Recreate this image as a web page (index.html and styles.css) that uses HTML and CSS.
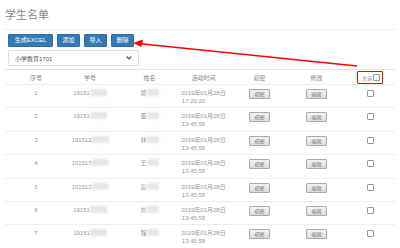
FILE: index.html
```html
<!DOCTYPE html>
<html lang="zh-CN">
<head>
    <meta charset="UTF-8">
    <meta name="viewport" content="width=device-width, initial-scale=1.0">
    <title>学生名单</title>
    <link rel="stylesheet" href="styles.css">
</head>
<body>

    <div class="page">
        <h2 class="title">学生名单</h2>

        <div class="toolbar">
            <div class="btn-row">
                <button class="btn">生成EXCEL</button>
                <button class="btn">添加</button>
                <button class="btn">导入</button>
                <button class="btn">删除</button>
            </div>
            <div class="select">
                <span>小学教育1701</span>
                <svg class="chevron" width="6" height="4" viewBox="0 0 6 4"><path d="M0.5 0.5 L3 3 L5.5 0.5" fill="none" stroke="#555" stroke-width="1.2"/></svg>
            </div>
        </div>

        <div class="grid head">
            <div class="cell">序号</div>
            <div class="cell">学号</div>
            <div class="cell name-col">姓名</div>
            <div class="cell">活动时间</div>
            <div class="cell">初密</div>
            <div class="cell">修改</div>
            <div class="cell"><span class="all-box">全选<span class="check"></span></span></div>
        </div>

        <div id="rows"></div>
    </div>

    <svg class="arrow" width="400" height="248" viewBox="0 0 400 248">
        <line x1="357" y1="66" x2="138" y2="43.5" stroke="#f00" stroke-width="1.3"/>
        <path d="M133 43 L143 39.5 L141.5 47 Z" fill="#f00"/>
    </svg>

    <script>
        const rows = [
            { no: 1, id: '19151', time: '17:20:20' },
            { no: 2, id: '19151', time: '13:45:58' },
            { no: 3, id: '191512', time: '13:45:58' },
            { no: 4, id: '191517', time: '13:45:58' },
            { no: 5, id: '191512', time: '13:45:58' },
            { no: 6, id: '19151', time: '13:45:58' },
            { no: 7, id: '19151', time: '13:45:58' }
        ];
        const names = ['郑', '董', '林', '王', '彭', '刘', '程'];

        const box = document.getElementById('rows');
        rows.forEach((r, i) => {
            const row = document.createElement('div');
            row.className = 'grid row';
            row.innerHTML = `
                <div class="cell">${r.no}</div>
                <div class="cell">${r.id}<span class="blur"></span></div>
                <div class="cell name-col">${names[i]}<span class="blur short"></span></div>
                <div class="cell date"><div class="date-box"><div class="nowrap">2019年01月28日</div>${r.time}</div></div>
                <div class="cell"><button class="small-btn">初密</button></div>
                <div class="cell"><button class="small-btn">编辑</button></div>
                <div class="cell"><span class="check"></span></div>`;
            box.appendChild(row);
        });
    </script>

</body>
</html>
```

FILE: styles.css
```css
body {
    margin: 0;
    padding: 0;
    background-color: #fff;
    font-family: "Liberation Sans", "Noto Sans CJK SC", sans-serif;
    color: #999;
}

.page {
    padding: 0 5px;
}

.title {
    margin: 0;
    padding-top: 8px;
    height: 21px;
    font-size: 11px;
    line-height: 14px;
    font-weight: normal;
    color: #888;
    border-bottom: 1px solid #eee;
}

.toolbar {
    padding: 4px 3px 3px;
    border-bottom: 1px solid #e5e5e5;
}

.btn-row {
    display: flex;
    gap: 3px;
}

.btn {
    height: 13px;
    padding: 0 4px;
    background-color: #337ab7;
    border: 1px solid #2e6da4;
    border-radius: 1px;
    color: #fff;
    font-family: inherit;
    font-size: 6px;
    line-height: 11px;
    cursor: pointer;
}

.btn:first-child {
    width: 45px;
}

.btn:not(:first-child) {
    width: 23px;
    margin-left: 1px;
}

.select {
    display: flex;
    justify-content: space-between;
    align-items: center;
    width: 117px;
    height: 14px;
    margin-top: 3px;
    padding: 0 6px;
    border: 1px solid #ddd;
    border-radius: 1px;
    font-size: 6px;
    color: #555;
}

.grid {
    display: grid;
    grid-template-columns: 62px 46px 63px 55px 57px 57px 50px;
    border-bottom: 1px solid #eee;
}

.head {
    height: 15px;
    align-items: center;
    font-size: 6px;
    color: #888;
    padding-top: 1px;
    box-sizing: border-box;
}

.row {
    height: 22.4px;
    font-size: 6px;
    line-height: 8px;
}

.cell {
    text-align: center;
}

.row .cell {
    padding-top: 4px;
}

.name-col {
    padding-left: 10px;
}

.blur {
    display: inline-block;
    width: 17px;
    height: 7px;
    vertical-align: -1px;
    background-color: #e6e6e6;
    filter: blur(1px);
}

.blur.short {
    width: 12px;
}

.date {
    text-align: left;
}

.date-box {
    width: 25px;
    margin-left: 5px;
    text-align: center;
}

.nowrap {
    white-space: nowrap;
}

.small-btn {
    height: 10px;
    padding: 0 4px;
    margin-top: 0;
    background: linear-gradient(#f3f3f3, #dcdcdc);
    border: 1px solid #aaa;
    border-radius: 1px;
    font-family: inherit;
    font-size: 5px;
    line-height: 8px;
    color: #777;
}

.check {
    display: inline-block;
    width: 5px;
    height: 5px;
    border: 1px solid #999;
    border-radius: 1px;
    background-color: #fff;
    margin-top: 1px;
}

.all-box {
    display: inline-flex;
    align-items: center;
    gap: 1px;
    padding: 2px 2px 2px 4px;
    border: 1px solid #f00;
    border-radius: 1px;
    font-size: 5px;
}

.all-box .check {
    margin-top: 0;
}

.arrow {
    position: absolute;
    top: 0;
    left: 0;
    pointer-events: none;
}
```
